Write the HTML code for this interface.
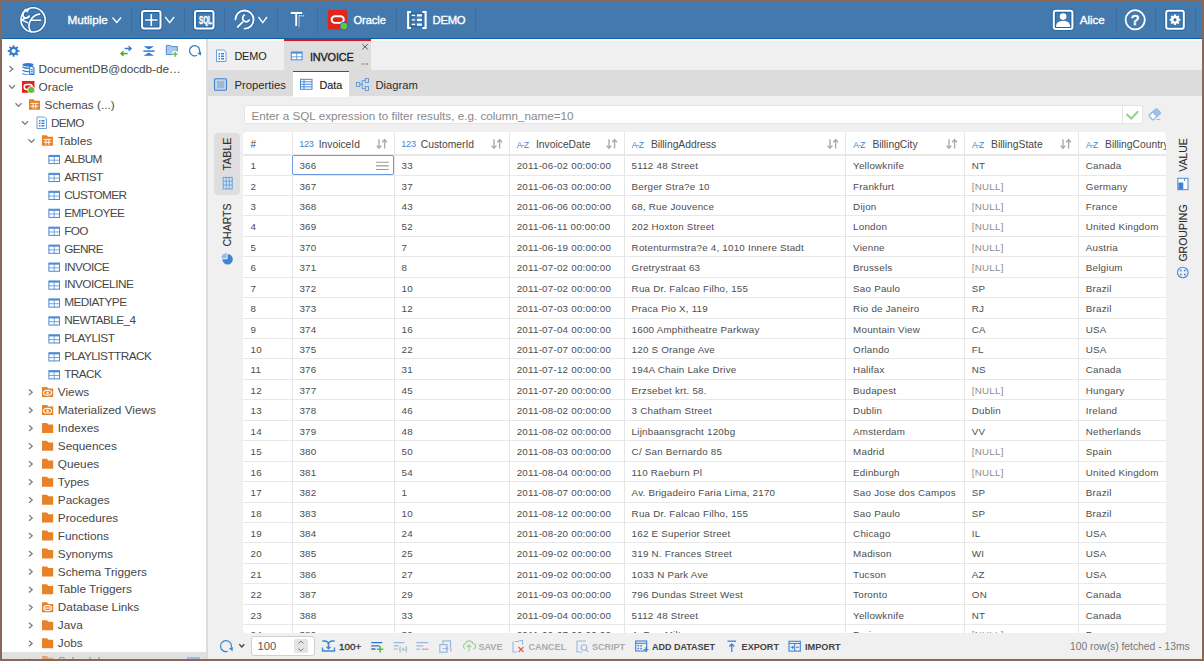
<!DOCTYPE html><html><head><meta charset="utf-8"><style>
*{box-sizing:border-box;margin:0;padding:0}
html,body{width:1204px;height:661px;overflow:hidden;background:#86695a;font-family:"Liberation Sans", sans-serif;}
.abs{position:absolute}
#app{position:absolute;left:2px;top:2px;width:1200px;height:657px;background:#f0f0f0;overflow:hidden}
.t{position:absolute;white-space:nowrap;line-height:1}
svg{position:absolute;overflow:visible}
</style></head><body>
<div id="app"></div>
<div class="abs" style="left:0;top:0;width:1204px;height:661px;overflow:hidden">
<div class="abs" style="left:2px;top:2px;width:1200px;height:36px;background:#4479ae"></div>
<div class="abs" style="left:2px;top:38px;width:1200px;height:1px;background:#0d5fa6"></div>
<div class="abs" style="left:131.4px;top:7px;width:1px;height:25.5px;background:#3d6e9f"></div>
<div class="abs" style="left:184.4px;top:7px;width:1px;height:25.5px;background:#3d6e9f"></div>
<div class="abs" style="left:224.4px;top:7px;width:1px;height:25.5px;background:#3d6e9f"></div>
<div class="abs" style="left:277px;top:7px;width:1px;height:25.5px;background:#3d6e9f"></div>
<div class="abs" style="left:317.4px;top:7px;width:1px;height:25.5px;background:#3d6e9f"></div>
<div class="abs" style="left:396.4px;top:7px;width:1px;height:25.5px;background:#3d6e9f"></div>
<div class="abs" style="left:474.9px;top:7px;width:1px;height:25.5px;background:#3d6e9f"></div>
<div class="abs" style="left:1115.8px;top:7px;width:1px;height:25.5px;background:#3d6e9f"></div>
<div class="abs" style="left:1155.1px;top:7px;width:1px;height:25.5px;background:#3d6e9f"></div>
<div class="abs" style="left:1195px;top:7px;width:1px;height:25.5px;background:#3d6e9f"></div>
<svg style="left:0;top:0" width="1" height="1"><g fill="none" stroke="#1160a8" stroke-width="3.4" stroke-linecap="round" stroke-linejoin="round" opacity="0.45"><circle cx="33.1" cy="19.9" r="12.1"/>
<path d="M22.8 14.6 C23 13 23.6 11.8 24.4 11.2 L25.5 9.4 L27.1 11.6 L28.7 9.4"/>
<path d="M22.8 14.6 C23.2 17 24.5 18.1 26.4 18.1 C27.9 18.1 28.8 17.1 29.2 15.9"/>
<path d="M21.6 19.7 L28.9 16.7 M21.6 19.7 L27.4 22.6"/>
<path d="M39.7 14.1 C35.8 14.2 32.6 16.8 30.6 20.2 C28.6 23.6 28.3 28.2 30.9 31.7"/>
<path d="M31.2 20.3 H40.6"/></g><g fill="none" stroke="#fff" stroke-width="1.6" stroke-linecap="round" stroke-linejoin="round"><circle cx="33.1" cy="19.9" r="12.1"/>
<path d="M22.8 14.6 C23 13 23.6 11.8 24.4 11.2 L25.5 9.4 L27.1 11.6 L28.7 9.4"/>
<path d="M22.8 14.6 C23.2 17 24.5 18.1 26.4 18.1 C27.9 18.1 28.8 17.1 29.2 15.9"/>
<path d="M21.6 19.7 L28.9 16.7 M21.6 19.7 L27.4 22.6"/>
<path d="M39.7 14.1 C35.8 14.2 32.6 16.8 30.6 20.2 C28.6 23.6 28.3 28.2 30.9 31.7"/>
<path d="M31.2 20.3 H40.6"/></g><circle cx="24.6" cy="14.6" r="0.7" fill="#1160a8"/></svg>
<div class="t" style="left:67.5px;top:14.10px;font-size:11.7px;font-weight:normal;color:#fff;letter-spacing:0px;-webkit-text-stroke:0.35px #fff">Mutliple</div>
<svg style="left:0;top:0" width="1" height="1"><path d="M112.5 17.5 L116.75 22.5 L121.0 17.5" fill="none" stroke="#fff" stroke-width="1.3"/></svg>
<svg style="left:0;top:0" width="1" height="1"><rect x="141.79999999999998" y="10.7" width="19.0" height="18.200000000000003" rx="2.5" fill="none" stroke="#0d5fa6" stroke-width="3.6" opacity="0.55"/><rect x="143.7" y="12.6" width="15.2" height="14.400000000000002" fill="none" stroke="#0d5fa6" stroke-width="1" opacity="0.6"/><rect x="142.1" y="11" width="18.4" height="17.6" rx="2" fill="none" stroke="#fff" stroke-width="2"/></svg>
<svg style="left:0;top:0" width="1" height="1"><path d="M151.3 14 V26 M145.2 20 H157.6" stroke="#0d5fa6" stroke-width="3.4" opacity="0.5"/><path d="M151.3 14 V26 M145.2 20 H157.6" stroke="#fff" stroke-width="1.7"/></svg>
<svg style="left:0;top:0" width="1" height="1"><path d="M165.2 17 L169.7 22.6 L174.2 17" fill="none" stroke="#fff" stroke-width="1.3"/></svg>
<svg style="left:0;top:0" width="1" height="1"><rect x="194.7" y="10.7" width="19.1" height="18.200000000000003" rx="2.5" fill="none" stroke="#0d5fa6" stroke-width="3.6" opacity="0.55"/><rect x="196.6" y="12.6" width="15.3" height="14.400000000000002" fill="none" stroke="#0d5fa6" stroke-width="1" opacity="0.6"/><rect x="195" y="11" width="18.5" height="17.6" rx="2" fill="none" stroke="#fff" stroke-width="2"/></svg>
<div class="t" style="left:198.6px;top:14.6px;font-size:9px;font-weight:bold;color:#fff;letter-spacing:-0.2px;transform:scale(0.72,1.22);transform-origin:0 0;-webkit-text-stroke:0.35px #fff">SQL</div>
<svg style="left:0;top:0" width="1" height="1"><g fill="none" stroke="#1160a8" stroke-width="3.4" stroke-linecap="round" opacity="0.45"><path d="M235.4 19.6 A9.1 9.1 0 1 1 244.5 28.7"/><path d="M244.4 15.1 A3.6 3.6 0 1 0 249.3 20.1"/><path d="M242.6 22.2 L237.6 27"/></g><g fill="none" stroke="#fff" stroke-width="1.8" stroke-linecap="round"><path d="M235.4 19.6 A9.1 9.1 0 1 1 244.5 28.7"/><path d="M244.4 15.1 A3.6 3.6 0 1 0 249.3 20.1"/><path d="M242.6 22.2 L237.6 27"/></g></svg>
<svg style="left:0;top:0" width="1" height="1"><path d="M258.5 17 L262.75 22.6 L267.0 17" fill="none" stroke="#fff" stroke-width="1.3"/></svg>
<svg style="left:0;top:0" width="1" height="1"><g fill="none" stroke="#1160a8" opacity="0.5" transform="translate(0.3,0.6)"><path d="M290.8 13 H302.2 M296.2 13 V26" stroke-width="1.9"/><path d="M299.1 15.5 V27.8 M299.1 15.95 H304.2" stroke-width="1.2" stroke-dasharray="1.1 0.9"/></g><g fill="none" stroke="#fff"><path d="M290.8 13 H302.2 M296.2 13 V26" stroke-width="1.9"/><path d="M299.1 15.5 V27.8 M299.1 15.95 H304.2" stroke-width="1.2" stroke-dasharray="1.1 0.9"/></g></svg>
<svg style="left:0;top:0" width="1" height="1">
<rect x="327.8" y="10" width="19.5" height="19.4" rx="1.5" fill="#e1251b"/>
<rect x="331.6" y="16.3" width="12.2" height="6.6" rx="3.3" fill="none" stroke="#fff" stroke-width="1.9"/>
<circle cx="343.9" cy="26.1" r="4.3" fill="#2a68a8"/><circle cx="343.9" cy="26.1" r="3.4" fill="#6cc23a"/></svg>
<div class="t" style="left:353.5px;top:14.89px;font-size:11.0px;font-weight:normal;color:#fff;letter-spacing:0px;-webkit-text-stroke:0.35px #fff">Oracle</div>
<svg style="left:0;top:0" width="1" height="1">
<g fill="none" stroke="#1160a8" stroke-width="1" opacity="0.8"><rect x="411" y="13.3" width="11.8" height="13.5"/></g>
<g fill="none" stroke="#fff" stroke-width="2"><path d="M410.9 12.1 H408.1 V27.9 H410.9"/><path d="M422.4 12.1 H425.6 V27.9 H422.4"/></g>
<g stroke="#fff"><path d="M411.7 15.3 H415.1 M411.7 19.8 H415.1 M411.7 24.4 H415.1" stroke-width="1.2"/><path d="M417 15.45 H421.9 M417 19.85 H421.9 M417 24.55 H421.9" stroke-width="2.3"/></g>
</svg>
<div class="t" style="left:432.5px;top:14.63px;font-size:11.3px;font-weight:normal;color:#fff;letter-spacing:-0.25px;-webkit-text-stroke:0.35px #fff">DEMO</div>
<svg style="left:0;top:0" width="1" height="1"><rect x="1053.5" y="10.5" width="19.200000000000003" height="18.8" rx="2.5" fill="none" stroke="#0d5fa6" stroke-width="3.6" opacity="0.55"/><rect x="1055.3999999999999" y="12.4" width="15.400000000000002" height="15.0" fill="none" stroke="#0d5fa6" stroke-width="1" opacity="0.6"/><rect x="1053.8" y="10.8" width="18.6" height="18.2" rx="2" fill="none" stroke="#fff" stroke-width="2"/></svg>
<svg style="left:0;top:0" width="1" height="1"><circle cx="1063.1" cy="16.6" r="3.3" fill="#fff"/><path d="M1056 27 C1056 22.5 1059 21 1063.1 21 C1067.2 21 1070.2 22.5 1070.2 27 Z" fill="#fff"/></svg>
<div class="t" style="left:1079.7px;top:14.28px;font-size:11.6px;font-weight:normal;color:#fff;letter-spacing:0px;-webkit-text-stroke:0.35px #fff">Alice</div>
<svg style="left:0;top:0" width="1" height="1"><circle cx="1135.2" cy="19.8" r="9.6" fill="none" stroke="#fff" stroke-width="1.8"/></svg>
<div class="t" style="left:1130.9px;top:12.6px;font-size:14.5px;color:#fff;font-weight:normal;-webkit-text-stroke:0.7px #fff">?</div>
<svg style="left:0;top:0" width="1" height="1"><rect x="1165.9" y="10.5" width="18.200000000000003" height="18.6" rx="2.5" fill="none" stroke="#0d5fa6" stroke-width="3.6" opacity="0.55"/><rect x="1167.8" y="12.4" width="14.400000000000002" height="14.8" fill="none" stroke="#0d5fa6" stroke-width="1" opacity="0.6"/><rect x="1166.2" y="10.8" width="17.6" height="18" rx="2" fill="none" stroke="#fff" stroke-width="2"/></svg>
<svg style="left:0;top:0" width="1" height="1"><path d="M1178.79 18.23 L1178.98 18.81 L1180.30 18.75 L1180.30 20.85 L1178.98 20.79 L1178.79 21.37 L1178.51 21.91 L1179.49 22.81 L1178.01 24.29 L1177.11 23.31 L1176.57 23.59 L1175.99 23.78 L1176.05 25.10 L1173.95 25.10 L1174.01 23.78 L1173.43 23.59 L1172.89 23.31 L1171.99 24.29 L1170.51 22.81 L1171.49 21.91 L1171.21 21.37 L1171.02 20.79 L1169.70 20.85 L1169.70 18.75 L1171.02 18.81 L1171.21 18.23 L1171.49 17.69 L1170.51 16.79 L1171.99 15.31 L1172.89 16.29 L1173.43 16.01 L1174.01 15.82 L1173.95 14.50 L1176.05 14.50 L1175.99 15.82 L1176.57 16.01 L1177.11 16.29 L1178.01 15.31 L1179.49 16.79 L1178.51 17.69 Z" fill="#fff"/><circle cx="1175" cy="19.8" r="1.6" fill="#2f6aa6"/></svg>
<div class="abs" style="left:2px;top:39px;width:204px;height:620px;background:#fff"></div>
<div class="abs" style="left:206px;top:39px;width:2px;height:620px;background:#dcdcdc"></div>
<svg style="left:0;top:0" width="1" height="1">
<path d="M17.57 49.35 L17.82 50.16 L19.43 50.08 L19.43 51.92 L17.82 51.84 L17.57 52.65 L17.18 53.39 L18.37 54.47 L17.07 55.77 L15.99 54.58 L15.25 54.97 L14.44 55.22 L14.52 56.83 L12.68 56.83 L12.76 55.22 L11.95 54.97 L11.21 54.58 L10.13 55.77 L8.83 54.47 L10.02 53.39 L9.63 52.65 L9.38 51.84 L7.77 51.92 L7.77 50.08 L9.38 50.16 L9.63 49.35 L10.02 48.61 L8.83 47.53 L10.13 46.23 L11.21 47.42 L11.95 47.03 L12.76 46.78 L12.68 45.17 L14.52 45.17 L14.44 46.78 L15.25 47.03 L15.99 47.42 L17.07 46.23 L18.37 47.53 L17.18 48.61 Z" fill="#2f7bd0"/><circle cx="13.6" cy="51" r="2.1" fill="#fff"/>
<g fill="none" stroke="#4aa531" stroke-width="1.5"><path d="M121.8 53.6 H127.6"/><path d="M123.5 51.3 L121.1 53.6 L123.5 55.9"/></g>
<g fill="none" stroke="#2f7bd0" stroke-width="1.5"><path d="M124.7 48.5 H130.5"/><path d="M128.6 46.2 L131 48.5 L128.6 50.8"/></g>
<path d="M143.5 46.2 H154.1 L148.8 49.6 Z" fill="#2f7bd0"/><path d="M143.4 51.1 H154.6" stroke="#2f7bd0" stroke-width="1.5"/><path d="M143.5 55.8 H154.1 L148.8 52.5 Z" fill="#2f7bd0"/>
<path d="M166.3 45.4 H170.5 L171.8 46.6 H177.4 V54.6 H166.3 Z" fill="#a9c8ec" stroke="#3d84d2" stroke-width="0.9"/>
<rect x="172.5" y="51.3" width="6" height="6" fill="#fff"/>
<path d="M172.8 54.3 H177.6 M175.2 51.9 V56.7" stroke="#6cc24a" stroke-width="1.5"/>
<path d="M197.15 55.2 A5.1 5.1 0 1 1 199.4 52.5" fill="none" stroke="#2f7bd0" stroke-width="1.25"/>
<path d="M197.4 53.6 L201.2 51.4 L200.9 55.6 Z" fill="#2f7bd0"/>
</svg>
<svg style="left:0;top:0" width="1" height="1"><path d="M9.5 66.2 L12.7 69 L9.5 71.8" fill="none" stroke="#7a7a7a" stroke-width="1.25"/></svg>
<svg style="left:0;top:0" width="1" height="1"><g fill="#2f7bd0">
<ellipse cx="28.0" cy="64.7" rx="5.6" ry="1.7"/>
<path d="M22.4 66.3 Q25.4 67.7 28.9 67.6 V68.9 Q25.4 69.0 22.4 67.7 Z"/>
<path d="M22.4 69.7 Q25.4 71.1 28.9 71.0 V72.3 Q25.4 72.4 22.4 71.1 Z"/>
<path d="M22.4 73.1 Q25.4 74.5 28.9 74.4 V74.9 Q25.4 75.0 22.4 74.3 Z"/>
</g>
<path d="M29.7 66.3 H32.2 L33.9 68.0 V74.5 H29.7 Z" fill="#fff" stroke="#2f7bd0" stroke-width="1.2"/>
<path d="M31.0 69.6 H32.8 M31.0 71.4 H32.8 M31.0 73.2 H32.8" stroke="#2f7bd0" stroke-width="1"/>
</svg>
<div class="t" style="left:38.6px;top:63.71px;font-size:11.8px;font-weight:normal;color:#474747;letter-spacing:-0.05px">DocumentDB@docdb-de…</div>
<svg style="left:0;top:0" width="1" height="1"><path d="M9 85.2 L12 88.4 L15 85.2" fill="none" stroke="#7a7a7a" stroke-width="1.25"/></svg>
<svg style="left:0;top:0" width="1" height="1">
<rect x="22" y="81" width="12.5" height="11.8" fill="#e1251b"/>
<rect x="24.2" y="84.5" width="8" height="5" rx="2.5" fill="none" stroke="#fff" stroke-width="1.5"/>
<circle cx="31.2" cy="90" r="3.7" fill="#fff"/><circle cx="31.2" cy="90" r="3" fill="#5fbf3a"/></svg>
<div class="t" style="left:38.6px;top:82.15px;font-size:11.8px;font-weight:normal;color:#474747;letter-spacing:0px">Oracle</div>
<svg style="left:0;top:0" width="1" height="1"><path d="M15.5 103.2 L18.5 106.4 L21.5 103.2" fill="none" stroke="#7a7a7a" stroke-width="1.25"/></svg>
<svg style="left:0;top:0" width="1" height="1">
<path d="M29 99.2 H33.5 L35 100.7 H40 V109.7 H29 Z" fill="#e8822a"/>
<g stroke="#fff" stroke-width="0.9" fill="none"><path d="M30.5 103.4 H38.5 M30.5 106.2 H38.5 M33 103.4 V108.7 M35.8 103.4 V108.7"/></g></svg>
<div class="t" style="left:44.6px;top:100.09px;font-size:11.8px;font-weight:normal;color:#474747;letter-spacing:0px">Schemas (...)</div>
<svg style="left:0;top:0" width="1" height="1"><path d="M22 121.2 L25 124.4 L28 121.2" fill="none" stroke="#7a7a7a" stroke-width="1.25"/></svg>
<svg style="left:0;top:0" width="1" height="1"><path d="M37 117 H44.5 L46.5 119 V128.5 H37 Z" fill="#fff" stroke="#6b9fe0" stroke-width="1"/>
<g fill="#3d84d2"><rect x="39" y="120" width="1.5" height="1.5"/><rect x="41.5" y="120" width="3" height="1.5"/><rect x="39" y="122.5" width="1.5" height="1.5"/><rect x="41.5" y="122.5" width="3" height="1.5"/><rect x="39" y="125" width="1.5" height="1.5"/><rect x="41.5" y="125" width="3" height="1.5"/></g></svg>
<div class="t" style="left:51px;top:118.03px;font-size:11.8px;font-weight:normal;color:#474747;letter-spacing:-0.664px">DEMO</div>
<svg style="left:0;top:0" width="1" height="1"><path d="M28.5 139.2 L31.5 142.4 L34.5 139.2" fill="none" stroke="#7a7a7a" stroke-width="1.25"/></svg>
<svg style="left:0;top:0" width="1" height="1">
<path d="M42 135.2 H46.5 L48 136.7 H53 V145.7 H42 Z" fill="#e8822a"/>
<g stroke="#fff" stroke-width="0.9" fill="none"><path d="M43.5 139.39999999999998 H51.5 M43.5 142.2 H51.5 M46 139.39999999999998 V144.7 M48.8 139.39999999999998 V144.7"/></g></svg>
<div class="t" style="left:58px;top:135.97px;font-size:11.8px;font-weight:normal;color:#474747;letter-spacing:0px">Tables</div>
<svg style="left:0;top:0" width="1" height="1"><rect x="48.9" y="155.40000000000003" width="10.6" height="8.2" fill="#fff" stroke="#4a8ad6" stroke-width="1"/>
<rect x="48.9" y="155.40000000000003" width="10.6" height="1.6" fill="#4a8ad6"/>
<path d="M48.9 160.20000000000005 H59.5 M54.199999999999996 156.40000000000003 V163.60000000000002" stroke="#4a8ad6" stroke-width="0.9" opacity="0.85"/></svg>
<div class="t" style="left:64.2px;top:153.91px;font-size:11.8px;font-weight:normal;color:#474747;letter-spacing:-0.61px">ALBUM</div>
<svg style="left:0;top:0" width="1" height="1"><rect x="48.9" y="173.34000000000003" width="10.6" height="8.2" fill="#fff" stroke="#4a8ad6" stroke-width="1"/>
<rect x="48.9" y="173.34000000000003" width="10.6" height="1.6" fill="#4a8ad6"/>
<path d="M48.9 178.14000000000004 H59.5 M54.199999999999996 174.34000000000003 V181.54000000000002" stroke="#4a8ad6" stroke-width="0.9" opacity="0.85"/></svg>
<div class="t" style="left:64.2px;top:171.85px;font-size:11.8px;font-weight:normal;color:#474747;letter-spacing:-0.522px">ARTIST</div>
<svg style="left:0;top:0" width="1" height="1"><rect x="48.9" y="191.28000000000003" width="10.6" height="8.2" fill="#fff" stroke="#4a8ad6" stroke-width="1"/>
<rect x="48.9" y="191.28000000000003" width="10.6" height="1.6" fill="#4a8ad6"/>
<path d="M48.9 196.08000000000004 H59.5 M54.199999999999996 192.28000000000003 V199.48000000000002" stroke="#4a8ad6" stroke-width="0.9" opacity="0.85"/></svg>
<div class="t" style="left:64.2px;top:189.79px;font-size:11.8px;font-weight:normal;color:#474747;letter-spacing:-0.631px">CUSTOMER</div>
<svg style="left:0;top:0" width="1" height="1"><rect x="48.9" y="209.22000000000003" width="10.6" height="8.2" fill="#fff" stroke="#4a8ad6" stroke-width="1"/>
<rect x="48.9" y="209.22000000000003" width="10.6" height="1.6" fill="#4a8ad6"/>
<path d="M48.9 214.02000000000004 H59.5 M54.199999999999996 210.22000000000003 V217.42000000000002" stroke="#4a8ad6" stroke-width="0.9" opacity="0.85"/></svg>
<div class="t" style="left:64.2px;top:207.73px;font-size:11.8px;font-weight:normal;color:#474747;letter-spacing:-0.609px">EMPLOYEE</div>
<svg style="left:0;top:0" width="1" height="1"><rect x="48.9" y="227.16000000000003" width="10.6" height="8.2" fill="#fff" stroke="#4a8ad6" stroke-width="1"/>
<rect x="48.9" y="227.16000000000003" width="10.6" height="1.6" fill="#4a8ad6"/>
<path d="M48.9 231.96000000000004 H59.5 M54.199999999999996 228.16000000000003 V235.36" stroke="#4a8ad6" stroke-width="0.9" opacity="0.85"/></svg>
<div class="t" style="left:64.2px;top:225.67px;font-size:11.8px;font-weight:normal;color:#474747;letter-spacing:-0.639px">FOO</div>
<svg style="left:0;top:0" width="1" height="1"><rect x="48.9" y="245.10000000000002" width="10.6" height="8.2" fill="#fff" stroke="#4a8ad6" stroke-width="1"/>
<rect x="48.9" y="245.10000000000002" width="10.6" height="1.6" fill="#4a8ad6"/>
<path d="M48.9 249.90000000000003 H59.5 M54.199999999999996 246.10000000000002 V253.3" stroke="#4a8ad6" stroke-width="0.9" opacity="0.85"/></svg>
<div class="t" style="left:64.2px;top:243.61px;font-size:11.8px;font-weight:normal;color:#474747;letter-spacing:-0.629px">GENRE</div>
<svg style="left:0;top:0" width="1" height="1"><rect x="48.9" y="263.04" width="10.6" height="8.2" fill="#fff" stroke="#4a8ad6" stroke-width="1"/>
<rect x="48.9" y="263.04" width="10.6" height="1.6" fill="#4a8ad6"/>
<path d="M48.9 267.84000000000003 H59.5 M54.199999999999996 264.04 V271.24" stroke="#4a8ad6" stroke-width="0.9" opacity="0.85"/></svg>
<div class="t" style="left:64.2px;top:261.55px;font-size:11.8px;font-weight:normal;color:#474747;letter-spacing:-0.52px">INVOICE</div>
<svg style="left:0;top:0" width="1" height="1"><rect x="48.9" y="280.9800000000001" width="10.6" height="8.2" fill="#fff" stroke="#4a8ad6" stroke-width="1"/>
<rect x="48.9" y="280.9800000000001" width="10.6" height="1.6" fill="#4a8ad6"/>
<path d="M48.9 285.7800000000001 H59.5 M54.199999999999996 281.9800000000001 V289.18000000000006" stroke="#4a8ad6" stroke-width="0.9" opacity="0.85"/></svg>
<div class="t" style="left:64.2px;top:279.49px;font-size:11.8px;font-weight:normal;color:#474747;letter-spacing:-0.51px">INVOICELINE</div>
<svg style="left:0;top:0" width="1" height="1"><rect x="48.9" y="298.92" width="10.6" height="8.2" fill="#fff" stroke="#4a8ad6" stroke-width="1"/>
<rect x="48.9" y="298.92" width="10.6" height="1.6" fill="#4a8ad6"/>
<path d="M48.9 303.72 H59.5 M54.199999999999996 299.92 V307.12" stroke="#4a8ad6" stroke-width="0.9" opacity="0.85"/></svg>
<div class="t" style="left:64.2px;top:297.43px;font-size:11.8px;font-weight:normal;color:#474747;letter-spacing:-0.561px">MEDIATYPE</div>
<svg style="left:0;top:0" width="1" height="1"><rect x="48.9" y="316.86000000000007" width="10.6" height="8.2" fill="#fff" stroke="#4a8ad6" stroke-width="1"/>
<rect x="48.9" y="316.86000000000007" width="10.6" height="1.6" fill="#4a8ad6"/>
<path d="M48.9 321.6600000000001 H59.5 M54.199999999999996 317.86000000000007 V325.06000000000006" stroke="#4a8ad6" stroke-width="0.9" opacity="0.85"/></svg>
<div class="t" style="left:64.2px;top:315.37px;font-size:11.8px;font-weight:normal;color:#474747;letter-spacing:-0.579px">NEWTABLE_4</div>
<svg style="left:0;top:0" width="1" height="1"><rect x="48.9" y="334.8" width="10.6" height="8.2" fill="#fff" stroke="#4a8ad6" stroke-width="1"/>
<rect x="48.9" y="334.8" width="10.6" height="1.6" fill="#4a8ad6"/>
<path d="M48.9 339.6 H59.5 M54.199999999999996 335.8 V343.0" stroke="#4a8ad6" stroke-width="0.9" opacity="0.85"/></svg>
<div class="t" style="left:64.2px;top:333.31px;font-size:11.8px;font-weight:normal;color:#474747;letter-spacing:-0.508px">PLAYLIST</div>
<svg style="left:0;top:0" width="1" height="1"><rect x="48.9" y="352.74000000000007" width="10.6" height="8.2" fill="#fff" stroke="#4a8ad6" stroke-width="1"/>
<rect x="48.9" y="352.74000000000007" width="10.6" height="1.6" fill="#4a8ad6"/>
<path d="M48.9 357.5400000000001 H59.5 M54.199999999999996 353.74000000000007 V360.94000000000005" stroke="#4a8ad6" stroke-width="0.9" opacity="0.85"/></svg>
<div class="t" style="left:64.2px;top:351.25px;font-size:11.8px;font-weight:normal;color:#474747;letter-spacing:-0.544px">PLAYLISTTRACK</div>
<svg style="left:0;top:0" width="1" height="1"><rect x="48.9" y="370.68" width="10.6" height="8.2" fill="#fff" stroke="#4a8ad6" stroke-width="1"/>
<rect x="48.9" y="370.68" width="10.6" height="1.6" fill="#4a8ad6"/>
<path d="M48.9 375.48 H59.5 M54.199999999999996 371.68 V378.88" stroke="#4a8ad6" stroke-width="0.9" opacity="0.85"/></svg>
<div class="t" style="left:64.2px;top:369.19px;font-size:11.8px;font-weight:normal;color:#474747;letter-spacing:-0.6px">TRACK</div>
<svg style="left:0;top:0" width="1" height="1"><path d="M29 389.52000000000004 L32.2 392.32000000000005 L29 395.12000000000006" fill="none" stroke="#7a7a7a" stroke-width="1.25"/></svg>
<svg style="left:0;top:0" width="1" height="1"><path d="M42 387.02000000000004 H47 L48.3 388.62000000000006 H53.2 V397.02000000000004 H42 Z" fill="#e8822a"/><ellipse cx="47.6" cy="392.72" rx="4" ry="2.4" fill="none" stroke="#fff" stroke-width="1.1"/><circle cx="47.6" cy="392.72" r="1.2" fill="#fff"/></svg>
<div class="t" style="left:57.8px;top:387.13px;font-size:11.8px;font-weight:normal;color:#474747;letter-spacing:0px">Views</div>
<svg style="left:0;top:0" width="1" height="1"><path d="M29 407.46 L32.2 410.26 L29 413.06" fill="none" stroke="#7a7a7a" stroke-width="1.25"/></svg>
<svg style="left:0;top:0" width="1" height="1"><path d="M42 404.96 H47 L48.3 406.56 H53.2 V414.96 H42 Z" fill="#e8822a"/><ellipse cx="47.6" cy="410.65999999999997" rx="4" ry="2.4" fill="none" stroke="#fff" stroke-width="1.1"/><circle cx="47.6" cy="410.65999999999997" r="1.2" fill="#fff"/></svg>
<div class="t" style="left:57.8px;top:405.07px;font-size:11.8px;font-weight:normal;color:#474747;letter-spacing:0px">Materialized Views</div>
<svg style="left:0;top:0" width="1" height="1"><path d="M29 425.40000000000003 L32.2 428.20000000000005 L29 431.00000000000006" fill="none" stroke="#7a7a7a" stroke-width="1.25"/></svg>
<svg style="left:0;top:0" width="1" height="1"><path d="M42 422.90000000000003 H47 L48.3 424.50000000000006 H53.2 V432.90000000000003 H42 Z" fill="#e8822a"/></svg>
<div class="t" style="left:57.8px;top:423.01px;font-size:11.8px;font-weight:normal;color:#474747;letter-spacing:0px">Indexes</div>
<svg style="left:0;top:0" width="1" height="1"><path d="M29 443.34 L32.2 446.14 L29 448.94" fill="none" stroke="#7a7a7a" stroke-width="1.25"/></svg>
<svg style="left:0;top:0" width="1" height="1"><path d="M42 440.84 H47 L48.3 442.44 H53.2 V450.84 H42 Z" fill="#e8822a"/></svg>
<div class="t" style="left:57.8px;top:440.95px;font-size:11.8px;font-weight:normal;color:#474747;letter-spacing:0px">Sequences</div>
<svg style="left:0;top:0" width="1" height="1"><path d="M29 461.28000000000003 L32.2 464.08000000000004 L29 466.88000000000005" fill="none" stroke="#7a7a7a" stroke-width="1.25"/></svg>
<svg style="left:0;top:0" width="1" height="1"><path d="M42 458.78000000000003 H47 L48.3 460.38000000000005 H53.2 V468.78000000000003 H42 Z" fill="#e8822a"/></svg>
<div class="t" style="left:57.8px;top:458.89px;font-size:11.8px;font-weight:normal;color:#474747;letter-spacing:0px">Queues</div>
<svg style="left:0;top:0" width="1" height="1"><path d="M29 479.21999999999997 L32.2 482.02 L29 484.82" fill="none" stroke="#7a7a7a" stroke-width="1.25"/></svg>
<svg style="left:0;top:0" width="1" height="1"><path d="M42 476.71999999999997 H47 L48.3 478.32 H53.2 V486.71999999999997 H42 Z" fill="#e8822a"/></svg>
<div class="t" style="left:57.8px;top:476.83px;font-size:11.8px;font-weight:normal;color:#474747;letter-spacing:0px">Types</div>
<svg style="left:0;top:0" width="1" height="1"><path d="M29 497.16 L32.2 499.96000000000004 L29 502.76000000000005" fill="none" stroke="#7a7a7a" stroke-width="1.25"/></svg>
<svg style="left:0;top:0" width="1" height="1"><path d="M42 494.66 H47 L48.3 496.26000000000005 H53.2 V504.66 H42 Z" fill="#e8822a"/></svg>
<div class="t" style="left:57.8px;top:494.77px;font-size:11.8px;font-weight:normal;color:#474747;letter-spacing:0px">Packages</div>
<svg style="left:0;top:0" width="1" height="1"><path d="M29 515.1000000000001 L32.2 517.9000000000001 L29 520.7" fill="none" stroke="#7a7a7a" stroke-width="1.25"/></svg>
<svg style="left:0;top:0" width="1" height="1"><path d="M42 512.6000000000001 H47 L48.3 514.2000000000002 H53.2 V522.6000000000001 H42 Z" fill="#e8822a"/></svg>
<div class="t" style="left:57.8px;top:512.71px;font-size:11.8px;font-weight:normal;color:#474747;letter-spacing:0px">Procedures</div>
<svg style="left:0;top:0" width="1" height="1"><path d="M29 533.0400000000001 L32.2 535.84 L29 538.64" fill="none" stroke="#7a7a7a" stroke-width="1.25"/></svg>
<svg style="left:0;top:0" width="1" height="1"><path d="M42 530.5400000000001 H47 L48.3 532.1400000000001 H53.2 V540.5400000000001 H42 Z" fill="#e8822a"/></svg>
<div class="t" style="left:57.8px;top:530.65px;font-size:11.8px;font-weight:normal;color:#474747;letter-spacing:0px">Functions</div>
<svg style="left:0;top:0" width="1" height="1"><path d="M29 550.9800000000001 L32.2 553.7800000000001 L29 556.58" fill="none" stroke="#7a7a7a" stroke-width="1.25"/></svg>
<svg style="left:0;top:0" width="1" height="1"><path d="M42 548.4800000000001 H47 L48.3 550.0800000000002 H53.2 V558.4800000000001 H42 Z" fill="#e8822a"/></svg>
<div class="t" style="left:57.8px;top:548.59px;font-size:11.8px;font-weight:normal;color:#474747;letter-spacing:0px">Synonyms</div>
<svg style="left:0;top:0" width="1" height="1"><path d="M29 568.9200000000001 L32.2 571.72 L29 574.52" fill="none" stroke="#7a7a7a" stroke-width="1.25"/></svg>
<svg style="left:0;top:0" width="1" height="1"><path d="M42 566.4200000000001 H47 L48.3 568.0200000000001 H53.2 V576.4200000000001 H42 Z" fill="#e8822a"/></svg>
<div class="t" style="left:57.8px;top:566.53px;font-size:11.8px;font-weight:normal;color:#474747;letter-spacing:0px">Schema Triggers</div>
<svg style="left:0;top:0" width="1" height="1"><path d="M29 586.86 L32.2 589.66 L29 592.4599999999999" fill="none" stroke="#7a7a7a" stroke-width="1.25"/></svg>
<svg style="left:0;top:0" width="1" height="1"><path d="M42 584.36 H47 L48.3 585.96 H53.2 V594.36 H42 Z" fill="#e8822a"/></svg>
<div class="t" style="left:57.8px;top:584.47px;font-size:11.8px;font-weight:normal;color:#474747;letter-spacing:0px">Table Triggers</div>
<svg style="left:0;top:0" width="1" height="1"><path d="M29 604.8000000000001 L32.2 607.6 L29 610.4" fill="none" stroke="#7a7a7a" stroke-width="1.25"/></svg>
<svg style="left:0;top:0" width="1" height="1"><path d="M42 602.3000000000001 H47 L48.3 603.9000000000001 H53.2 V612.3000000000001 H42 Z" fill="#e8822a"/><ellipse cx="47.6" cy="608.1" rx="3.8" ry="2.6" fill="none" stroke="#fff" stroke-width="1.2"/><path d="M45 608.1 H50.2" stroke="#fff" stroke-width="1.1"/></svg>
<div class="t" style="left:57.8px;top:602.41px;font-size:11.8px;font-weight:normal;color:#474747;letter-spacing:0px">Database Links</div>
<svg style="left:0;top:0" width="1" height="1"><path d="M29 622.74 L32.2 625.54 L29 628.3399999999999" fill="none" stroke="#7a7a7a" stroke-width="1.25"/></svg>
<svg style="left:0;top:0" width="1" height="1"><path d="M42 620.24 H47 L48.3 621.84 H53.2 V630.24 H42 Z" fill="#e8822a"/></svg>
<div class="t" style="left:57.8px;top:620.35px;font-size:11.8px;font-weight:normal;color:#474747;letter-spacing:0px">Java</div>
<svg style="left:0;top:0" width="1" height="1"><path d="M29 640.6800000000001 L32.2 643.48 L29 646.28" fill="none" stroke="#7a7a7a" stroke-width="1.25"/></svg>
<svg style="left:0;top:0" width="1" height="1"><path d="M42 638.1800000000001 H47 L48.3 639.7800000000001 H53.2 V648.1800000000001 H42 Z" fill="#e8822a"/></svg>
<div class="t" style="left:57.8px;top:638.29px;font-size:11.8px;font-weight:normal;color:#474747;letter-spacing:0px">Jobs</div>
<svg style="left:0;top:0" width="1" height="1"><path d="M29 658.6200000000001 L32.2 661.4200000000001 L29 664.22" fill="none" stroke="#7a7a7a" stroke-width="1.25"/></svg>
<svg style="left:0;top:0" width="1" height="1"><path d="M42 656.1200000000001 H47 L48.3 657.7200000000001 H53.2 V666.1200000000001 H42 Z" fill="#e8822a"/></svg>
<div class="t" style="left:57.8px;top:656.23px;font-size:11.8px;font-weight:normal;color:#474747;letter-spacing:0px">Scheduler</div>
<div class="abs" style="left:2px;top:652px;width:204px;height:7px;background:rgba(200,200,200,0.55)"></div>
<div class="abs" style="left:186.5px;top:657px;width:13px;height:2px;background:#9fbde3"></div>
<div class="abs" style="left:208px;top:39px;width:994px;height:620px;background:#f0f0f0"></div>
<div class="abs" style="left:208px;top:39px;width:76px;height:31px;background:#efefef"></div>
<div class="abs" style="left:208px;top:39px;width:994px;height:2px;background:#f8f8f8"></div>
<div class="abs" style="left:284px;top:39px;width:87px;height:31px;background:#dedede"></div>
<div class="abs" style="left:284px;top:39px;width:87px;height:1.8px;background:#e0141e"></div>
<svg style="left:0;top:0" width="1" height="1"><path d="M216.5 50 H224.0 L226.0 52 V61.5 H216.5 Z" fill="#fff" stroke="#6b9fe0" stroke-width="1"/>
<g fill="#3d84d2"><rect x="218.5" y="53" width="1.5" height="1.5"/><rect x="221.0" y="53" width="3" height="1.5"/><rect x="218.5" y="55.5" width="1.5" height="1.5"/><rect x="221.0" y="55.5" width="3" height="1.5"/><rect x="218.5" y="58" width="1.5" height="1.5"/><rect x="221.0" y="58" width="3" height="1.5"/></g></svg>
<div class="t" style="left:234.4px;top:51.47px;font-size:10.9px;font-weight:normal;color:#222;letter-spacing:-0.15px">DEMO</div>
<svg style="left:0;top:0" width="1" height="1"><rect x="291.3" y="52.0" width="10.8" height="7.800000000000001" fill="#fff" stroke="#4a8ad6" stroke-width="1"/>
<rect x="291.3" y="52.0" width="10.8" height="1.6" fill="#4a8ad6"/>
<path d="M291.3 56.8 H302.1 M296.7 53.0 V59.8" stroke="#4a8ad6" stroke-width="0.9" opacity="0.85"/></svg>
<div class="t" style="left:309.9px;top:51.67px;font-size:10.9px;font-weight:normal;color:#1a1a1a;letter-spacing:-0.15px;-webkit-text-stroke:0.3px #1a1a1a">INVOICE</div>
<svg style="left:0;top:0" width="1" height="1"><path d="M362.4 44.2 L367.8 49.4 M367.8 44.2 L362.4 49.4" stroke="#555" stroke-width="1"/><g fill="#666"><circle cx="362.3" cy="64" r="0.7"/><circle cx="364.8" cy="64" r="0.7"/><circle cx="367.3" cy="64" r="0.7"/></g></svg>
<div class="abs" style="left:208px;top:70.4px;width:994px;height:26.1px;background:#dcdcdc"></div>
<div class="abs" style="left:293px;top:70.6px;width:56.3px;height:26px;background:#fff"></div>
<div class="abs" style="left:293px;top:70.6px;width:56.3px;height:1.4px;background:#e0141e"></div>
<svg style="left:0;top:0" width="1" height="1"><rect x="214.5" y="78.8" width="12" height="11.5" rx="1" fill="#c5d4e8" stroke="#3d84d2" stroke-width="1.1"/><rect x="217" y="81" width="7.2" height="7.2" fill="#9fb6d4"/></svg>
<div class="t" style="left:234.4px;top:79.63px;font-size:11.3px;font-weight:normal;color:#2a2a2a;letter-spacing:0px">Properties</div>
<svg style="left:0;top:0" width="1" height="1"><g fill="none" stroke="#4a8ad6" stroke-width="1"><rect x="300.5" y="79.3" width="11.5" height="10"/><path d="M300.5 81.8 H312 M300.5 84.3 H312 M300.5 86.8 H312 M304 79.3 V89.3"/></g></svg>
<div class="t" style="left:319.5px;top:80.06px;font-size:10.8px;font-weight:normal;color:#1a1a1a;letter-spacing:0px;-webkit-text-stroke:0.15px #1a1a1a">Data</div>
<svg style="left:0;top:0" width="1" height="1"><g fill="none" stroke="#5b95d8" stroke-width="0.9"><rect x="356.4" y="82.4" width="3.4" height="4"/><rect x="365.3" y="78.5" width="3.2" height="4"/><rect x="365.3" y="86.5" width="3.2" height="4"/><path d="M359.8 84.4 H362.2 M362.2 80.5 V88.5 M362.2 80.5 H365.3 M362.2 88.5 H365.3"/></g></svg>
<div class="t" style="left:375.5px;top:79.72px;font-size:11.2px;font-weight:normal;color:#2a2a2a;letter-spacing:0px">Diagram</div>
<div class="abs" style="left:208px;top:97px;width:994px;height:562px;background:#f0f0f0"></div>
<div class="abs" style="left:243.6px;top:105.3px;width:899.3px;height:18.9px;background:#fff;border:1px solid #e4e4e4;border-radius:2px"></div>
<div class="abs" style="left:1122px;top:105.3px;width:1px;height:18.9px;background:#e4e4e4"></div>
<div class="t" style="left:251.5px;top:109.60px;font-size:11.7px;font-weight:normal;color:#8a8a8a;letter-spacing:0px">Enter a SQL expression to filter results, e.g. column_name=10</div>
<svg style="left:0;top:0" width="1" height="1"><path d="M1126.5 114 L1131.3 118.5 L1138.3 111.1" fill="none" stroke="#95cf8e" stroke-width="2.1"/>
<g transform="translate(1154.7,114.3) rotate(-42)"><rect x="-5.3" y="-3.1" width="10.6" height="6.2" rx="0.8" fill="#fff" stroke="#7eaee2" stroke-width="1.1"/><rect x="-0.6" y="-3.1" width="5.9" height="6.2" rx="0.6" fill="#9dc0e6"/></g><path d="M1156.3 119.5 H1160.2" stroke="#8db6e4" stroke-width="0.9"/></svg>
<div class="abs" style="left:214px;top:132.7px;width:25.8px;height:62px;background:#dedede;border-radius:4px"></div>
<div class="t" style="left:227.2px;top:154.2px;font-size:10.6px;color:#2e2e2e;letter-spacing:0px;-webkit-text-stroke:0.12px #2e2e2e;transform:translate(-50%,-50%) rotate(-90deg);">TABLE</div>
<svg style="left:0;top:0" width="1" height="1"><rect x="223.2" y="177.4" width="9" height="11.6" fill="#d3e2f4" stroke="#6a9fdc" stroke-width="1"/><g stroke="#6a9fdc" stroke-width="0.9"><path d="M223.2 181.2 H232.2 M223.2 185 H232.2 M226.2 177.4 V189 M229.2 177.4 V189"/></g></svg>
<div class="t" style="left:227.2px;top:225.4px;font-size:10.5px;color:#2e2e2e;letter-spacing:0px;-webkit-text-stroke:0.12px #2e2e2e;transform:translate(-50%,-50%) rotate(-90deg);">CHARTS</div>
<svg style="left:0;top:0" width="1" height="1"><path d="M227.6 259.2 V254 A5.2 5.2 0 1 1 222.4 259.2 Z" fill="#3d84d2"/><path d="M226.6 258.2 V253 A5.2 5.2 0 0 0 221.4 258.2 Z" fill="#8dbbea"/></svg>
<div class="t" style="left:1182.8px;top:155px;font-size:10.5px;color:#2e2e2e;letter-spacing:0px;-webkit-text-stroke:0.12px #2e2e2e;transform:translate(-50%,-50%) rotate(-90deg);">VALUE</div>
<svg style="left:0;top:0" width="1" height="1"><rect x="1177.8" y="178.3" width="10.2" height="11.4" fill="#fff" stroke="#4a8ad6" stroke-width="1"/><rect x="1178.3" y="182.5" width="5" height="7" fill="#3d84d2"/><path d="M1184.5 179 V181" stroke="#4a8ad6" stroke-width="1"/></svg>
<div class="t" style="left:1182.8px;top:233px;font-size:10.5px;color:#2e2e2e;letter-spacing:0px;-webkit-text-stroke:0.12px #2e2e2e;transform:translate(-50%,-50%) rotate(-90deg);">GROUPING</div>
<svg style="left:0;top:0" width="1" height="1"><circle cx="1182.8" cy="272.5" r="5.3" fill="none" stroke="#4a8ad6" stroke-width="1.1"/><g fill="#4a8ad6"><circle cx="1180.8" cy="270.5" r="0.9"/><circle cx="1184.8" cy="270.5" r="0.9"/><circle cx="1180.8" cy="274.5" r="0.9"/><circle cx="1184.8" cy="274.5" r="0.9"/></g></svg>
<div class="abs" style="left:243.3px;top:132.4px;width:922.7px;height:500.20000000000005px;background:#fff;border-radius:4px;overflow:hidden">
<div class="abs" style="left:0;top:21.70px;width:922.7px;height:1.6px;background:#e8e8e8"></div>
<div class="abs" style="left:0;top:42.23px;width:922.7px;height:1px;background:#e8e8e8"></div>
<div class="abs" style="left:0;top:62.66px;width:922.7px;height:1px;background:#e8e8e8"></div>
<div class="abs" style="left:0;top:83.09px;width:922.7px;height:1px;background:#e8e8e8"></div>
<div class="abs" style="left:0;top:103.52px;width:922.7px;height:1px;background:#e8e8e8"></div>
<div class="abs" style="left:0;top:123.95px;width:922.7px;height:1px;background:#e8e8e8"></div>
<div class="abs" style="left:0;top:144.38px;width:922.7px;height:1px;background:#e8e8e8"></div>
<div class="abs" style="left:0;top:164.81px;width:922.7px;height:1px;background:#e8e8e8"></div>
<div class="abs" style="left:0;top:185.24px;width:922.7px;height:1px;background:#e8e8e8"></div>
<div class="abs" style="left:0;top:205.67px;width:922.7px;height:1px;background:#e8e8e8"></div>
<div class="abs" style="left:0;top:226.10px;width:922.7px;height:1px;background:#e8e8e8"></div>
<div class="abs" style="left:0;top:246.53px;width:922.7px;height:1px;background:#e8e8e8"></div>
<div class="abs" style="left:0;top:266.96px;width:922.7px;height:1px;background:#e8e8e8"></div>
<div class="abs" style="left:0;top:287.39px;width:922.7px;height:1px;background:#e8e8e8"></div>
<div class="abs" style="left:0;top:307.82px;width:922.7px;height:1px;background:#e8e8e8"></div>
<div class="abs" style="left:0;top:328.25px;width:922.7px;height:1px;background:#e8e8e8"></div>
<div class="abs" style="left:0;top:348.68px;width:922.7px;height:1px;background:#e8e8e8"></div>
<div class="abs" style="left:0;top:369.11px;width:922.7px;height:1px;background:#e8e8e8"></div>
<div class="abs" style="left:0;top:389.54px;width:922.7px;height:1px;background:#e8e8e8"></div>
<div class="abs" style="left:0;top:409.97px;width:922.7px;height:1px;background:#e8e8e8"></div>
<div class="abs" style="left:0;top:430.40px;width:922.7px;height:1px;background:#e8e8e8"></div>
<div class="abs" style="left:0;top:450.83px;width:922.7px;height:1px;background:#e8e8e8"></div>
<div class="abs" style="left:0;top:471.26px;width:922.7px;height:1px;background:#e8e8e8"></div>
<div class="abs" style="left:0;top:491.69px;width:922.7px;height:1px;background:#e8e8e8"></div>
<div class="abs" style="left:0;top:512.12px;width:922.7px;height:1px;background:#e8e8e8"></div>
<div class="abs" style="left:48.70px;top:0;width:1px;height:500.20000000000005px;background:#e6e6e6"></div>
<div class="abs" style="left:150.70px;top:0;width:1px;height:500.20000000000005px;background:#e6e6e6"></div>
<div class="abs" style="left:265.70px;top:0;width:1px;height:500.20000000000005px;background:#e6e6e6"></div>
<div class="abs" style="left:380.70px;top:0;width:1px;height:500.20000000000005px;background:#e6e6e6"></div>
<div class="abs" style="left:601.70px;top:0;width:1px;height:500.20000000000005px;background:#e6e6e6"></div>
<div class="abs" style="left:720.70px;top:0;width:1px;height:500.20000000000005px;background:#e6e6e6"></div>
<div class="abs" style="left:834.70px;top:0;width:1px;height:500.20000000000005px;background:#e6e6e6"></div>
<div class="t" style="left:7.20px;top:7.53px;font-size:10px;font-weight:normal;color:#4d4d4d;letter-spacing:0px">#</div>
<div class="t" style="left:55.90px;top:7.71px;font-size:9.2px;font-weight:normal;color:#3d84d2;letter-spacing:-0.3px">123</div>
<div class="t" style="left:75.40px;top:7.48px;font-size:10.3px;font-weight:normal;color:#474747;letter-spacing:0px">InvoiceId</div>
<svg style="left:132.40px;top:7.00px" width="12" height="10"><g fill="none" stroke="#ababab" stroke-width="1.4"><path d="M3 0.3 V9.2 M0.6 6.6 L3 9.2 L5.4 6.6"/><path d="M8.6 9.5 V0.6 M6.2 3.2 L8.6 0.6 L11 3.2"/></g></svg>
<div class="t" style="left:158.00px;top:7.71px;font-size:9.2px;font-weight:normal;color:#3d84d2;letter-spacing:-0.3px">123</div>
<div class="t" style="left:177.50px;top:7.48px;font-size:10.3px;font-weight:normal;color:#474747;letter-spacing:0px">CustomerId</div>
<svg style="left:247.60px;top:7.00px" width="12" height="10"><g fill="none" stroke="#ababab" stroke-width="1.4"><path d="M3 0.3 V9.2 M0.6 6.6 L3 9.2 L5.4 6.6"/><path d="M8.6 9.5 V0.6 M6.2 3.2 L8.6 0.6 L11 3.2"/></g></svg>
<div class="t" style="left:273.50px;top:8.89px;font-size:8.4px;font-weight:normal;color:#3d84d2;letter-spacing:-0.6px">A-Z</div>
<div class="t" style="left:292.70px;top:7.48px;font-size:10.3px;font-weight:normal;color:#474747;letter-spacing:0px">InvoiceDate</div>
<svg style="left:362.50px;top:7.00px" width="12" height="10"><g fill="none" stroke="#ababab" stroke-width="1.4"><path d="M3 0.3 V9.2 M0.6 6.6 L3 9.2 L5.4 6.6"/><path d="M8.6 9.5 V0.6 M6.2 3.2 L8.6 0.6 L11 3.2"/></g></svg>
<div class="t" style="left:388.40px;top:8.89px;font-size:8.4px;font-weight:normal;color:#3d84d2;letter-spacing:-0.6px">A-Z</div>
<div class="t" style="left:407.60px;top:7.48px;font-size:10.3px;font-weight:normal;color:#474747;letter-spacing:0px">BillingAddress</div>
<svg style="left:584.00px;top:7.00px" width="12" height="10"><g fill="none" stroke="#ababab" stroke-width="1.4"><path d="M3 0.3 V9.2 M0.6 6.6 L3 9.2 L5.4 6.6"/><path d="M8.6 9.5 V0.6 M6.2 3.2 L8.6 0.6 L11 3.2"/></g></svg>
<div class="t" style="left:609.90px;top:8.89px;font-size:8.4px;font-weight:normal;color:#3d84d2;letter-spacing:-0.6px">A-Z</div>
<div class="t" style="left:629.10px;top:7.48px;font-size:10.3px;font-weight:normal;color:#474747;letter-spacing:0px">BillingCity</div>
<svg style="left:702.70px;top:7.00px" width="12" height="10"><g fill="none" stroke="#ababab" stroke-width="1.4"><path d="M3 0.3 V9.2 M0.6 6.6 L3 9.2 L5.4 6.6"/><path d="M8.6 9.5 V0.6 M6.2 3.2 L8.6 0.6 L11 3.2"/></g></svg>
<div class="t" style="left:728.60px;top:8.89px;font-size:8.4px;font-weight:normal;color:#3d84d2;letter-spacing:-0.6px">A-Z</div>
<div class="t" style="left:747.80px;top:7.48px;font-size:10.3px;font-weight:normal;color:#474747;letter-spacing:0px">BillingState</div>
<svg style="left:816.70px;top:7.00px" width="12" height="10"><g fill="none" stroke="#ababab" stroke-width="1.4"><path d="M3 0.3 V9.2 M0.6 6.6 L3 9.2 L5.4 6.6"/><path d="M8.6 9.5 V0.6 M6.2 3.2 L8.6 0.6 L11 3.2"/></g></svg>
<div class="t" style="left:842.60px;top:8.89px;font-size:8.4px;font-weight:normal;color:#3d84d2;letter-spacing:-0.6px">A-Z</div>
<div class="t" style="left:861.80px;top:7.48px;font-size:10.3px;font-weight:normal;color:#474747;letter-spacing:0px">BillingCountry</div>
<div class="t" style="left:7.20px;top:28.80px;font-size:9.8px;font-weight:normal;color:#4d4d4d;letter-spacing:0.22px">1</div>
<div class="t" style="left:56.10px;top:28.80px;font-size:9.8px;font-weight:normal;color:#4d4d4d;letter-spacing:0.22px">366</div>
<div class="t" style="left:158.20px;top:28.80px;font-size:9.8px;font-weight:normal;color:#4d4d4d;letter-spacing:0.22px">33</div>
<div class="t" style="left:273.40px;top:28.80px;font-size:9.8px;font-weight:normal;color:#4d4d4d;letter-spacing:0.22px">2011-06-02 00:00:00</div>
<div class="t" style="left:388.30px;top:28.80px;font-size:9.8px;font-weight:normal;color:#4d4d4d;letter-spacing:0.22px">5112 48 Street</div>
<div class="t" style="left:609.80px;top:28.80px;font-size:9.8px;font-weight:normal;color:#4d4d4d;letter-spacing:0.22px">Yellowknife</div>
<div class="t" style="left:728.50px;top:28.80px;font-size:9.8px;font-weight:normal;color:#4d4d4d;letter-spacing:0.22px">NT</div>
<div class="t" style="left:842.50px;top:28.80px;font-size:9.8px;font-weight:normal;color:#4d4d4d;letter-spacing:0.22px">Canada</div>
<div class="t" style="left:7.20px;top:49.23px;font-size:9.8px;font-weight:normal;color:#4d4d4d;letter-spacing:0.22px">2</div>
<div class="t" style="left:56.10px;top:49.23px;font-size:9.8px;font-weight:normal;color:#4d4d4d;letter-spacing:0.22px">367</div>
<div class="t" style="left:158.20px;top:49.23px;font-size:9.8px;font-weight:normal;color:#4d4d4d;letter-spacing:0.22px">37</div>
<div class="t" style="left:273.40px;top:49.23px;font-size:9.8px;font-weight:normal;color:#4d4d4d;letter-spacing:0.22px">2011-06-03 00:00:00</div>
<div class="t" style="left:388.30px;top:49.23px;font-size:9.8px;font-weight:normal;color:#4d4d4d;letter-spacing:0.22px">Berger Stra?e 10</div>
<div class="t" style="left:609.80px;top:49.23px;font-size:9.8px;font-weight:normal;color:#4d4d4d;letter-spacing:0.22px">Frankfurt</div>
<div class="t" style="left:728.50px;top:49.23px;font-size:9.8px;font-weight:normal;color:#8e8e8e;letter-spacing:0.22px">[NULL]</div>
<div class="t" style="left:842.50px;top:49.23px;font-size:9.8px;font-weight:normal;color:#4d4d4d;letter-spacing:0.22px">Germany</div>
<div class="t" style="left:7.20px;top:69.66px;font-size:9.8px;font-weight:normal;color:#4d4d4d;letter-spacing:0.22px">3</div>
<div class="t" style="left:56.10px;top:69.66px;font-size:9.8px;font-weight:normal;color:#4d4d4d;letter-spacing:0.22px">368</div>
<div class="t" style="left:158.20px;top:69.66px;font-size:9.8px;font-weight:normal;color:#4d4d4d;letter-spacing:0.22px">43</div>
<div class="t" style="left:273.40px;top:69.66px;font-size:9.8px;font-weight:normal;color:#4d4d4d;letter-spacing:0.22px">2011-06-06 00:00:00</div>
<div class="t" style="left:388.30px;top:69.66px;font-size:9.8px;font-weight:normal;color:#4d4d4d;letter-spacing:0.22px">68, Rue Jouvence</div>
<div class="t" style="left:609.80px;top:69.66px;font-size:9.8px;font-weight:normal;color:#4d4d4d;letter-spacing:0.22px">Dijon</div>
<div class="t" style="left:728.50px;top:69.66px;font-size:9.8px;font-weight:normal;color:#8e8e8e;letter-spacing:0.22px">[NULL]</div>
<div class="t" style="left:842.50px;top:69.66px;font-size:9.8px;font-weight:normal;color:#4d4d4d;letter-spacing:0.22px">France</div>
<div class="t" style="left:7.20px;top:90.09px;font-size:9.8px;font-weight:normal;color:#4d4d4d;letter-spacing:0.22px">4</div>
<div class="t" style="left:56.10px;top:90.09px;font-size:9.8px;font-weight:normal;color:#4d4d4d;letter-spacing:0.22px">369</div>
<div class="t" style="left:158.20px;top:90.09px;font-size:9.8px;font-weight:normal;color:#4d4d4d;letter-spacing:0.22px">52</div>
<div class="t" style="left:273.40px;top:90.09px;font-size:9.8px;font-weight:normal;color:#4d4d4d;letter-spacing:0.22px">2011-06-11 00:00:00</div>
<div class="t" style="left:388.30px;top:90.09px;font-size:9.8px;font-weight:normal;color:#4d4d4d;letter-spacing:0.22px">202 Hoxton Street</div>
<div class="t" style="left:609.80px;top:90.09px;font-size:9.8px;font-weight:normal;color:#4d4d4d;letter-spacing:0.22px">London</div>
<div class="t" style="left:728.50px;top:90.09px;font-size:9.8px;font-weight:normal;color:#8e8e8e;letter-spacing:0.22px">[NULL]</div>
<div class="t" style="left:842.50px;top:90.09px;font-size:9.8px;font-weight:normal;color:#4d4d4d;letter-spacing:0.22px">United Kingdom</div>
<div class="t" style="left:7.20px;top:110.52px;font-size:9.8px;font-weight:normal;color:#4d4d4d;letter-spacing:0.22px">5</div>
<div class="t" style="left:56.10px;top:110.52px;font-size:9.8px;font-weight:normal;color:#4d4d4d;letter-spacing:0.22px">370</div>
<div class="t" style="left:158.20px;top:110.52px;font-size:9.8px;font-weight:normal;color:#4d4d4d;letter-spacing:0.22px">7</div>
<div class="t" style="left:273.40px;top:110.52px;font-size:9.8px;font-weight:normal;color:#4d4d4d;letter-spacing:0.22px">2011-06-19 00:00:00</div>
<div class="t" style="left:388.30px;top:110.52px;font-size:9.8px;font-weight:normal;color:#4d4d4d;letter-spacing:0.22px">Rotenturmstra?e 4, 1010 Innere Stadt</div>
<div class="t" style="left:609.80px;top:110.52px;font-size:9.8px;font-weight:normal;color:#4d4d4d;letter-spacing:0.22px">Vienne</div>
<div class="t" style="left:728.50px;top:110.52px;font-size:9.8px;font-weight:normal;color:#8e8e8e;letter-spacing:0.22px">[NULL]</div>
<div class="t" style="left:842.50px;top:110.52px;font-size:9.8px;font-weight:normal;color:#4d4d4d;letter-spacing:0.22px">Austria</div>
<div class="t" style="left:7.20px;top:130.95px;font-size:9.8px;font-weight:normal;color:#4d4d4d;letter-spacing:0.22px">6</div>
<div class="t" style="left:56.10px;top:130.95px;font-size:9.8px;font-weight:normal;color:#4d4d4d;letter-spacing:0.22px">371</div>
<div class="t" style="left:158.20px;top:130.95px;font-size:9.8px;font-weight:normal;color:#4d4d4d;letter-spacing:0.22px">8</div>
<div class="t" style="left:273.40px;top:130.95px;font-size:9.8px;font-weight:normal;color:#4d4d4d;letter-spacing:0.22px">2011-07-02 00:00:00</div>
<div class="t" style="left:388.30px;top:130.95px;font-size:9.8px;font-weight:normal;color:#4d4d4d;letter-spacing:0.22px">Gretrystraat 63</div>
<div class="t" style="left:609.80px;top:130.95px;font-size:9.8px;font-weight:normal;color:#4d4d4d;letter-spacing:0.22px">Brussels</div>
<div class="t" style="left:728.50px;top:130.95px;font-size:9.8px;font-weight:normal;color:#8e8e8e;letter-spacing:0.22px">[NULL]</div>
<div class="t" style="left:842.50px;top:130.95px;font-size:9.8px;font-weight:normal;color:#4d4d4d;letter-spacing:0.22px">Belgium</div>
<div class="t" style="left:7.20px;top:151.38px;font-size:9.8px;font-weight:normal;color:#4d4d4d;letter-spacing:0.22px">7</div>
<div class="t" style="left:56.10px;top:151.38px;font-size:9.8px;font-weight:normal;color:#4d4d4d;letter-spacing:0.22px">372</div>
<div class="t" style="left:158.20px;top:151.38px;font-size:9.8px;font-weight:normal;color:#4d4d4d;letter-spacing:0.22px">10</div>
<div class="t" style="left:273.40px;top:151.38px;font-size:9.8px;font-weight:normal;color:#4d4d4d;letter-spacing:0.22px">2011-07-02 00:00:00</div>
<div class="t" style="left:388.30px;top:151.38px;font-size:9.8px;font-weight:normal;color:#4d4d4d;letter-spacing:0.22px">Rua Dr. Falcao Filho, 155</div>
<div class="t" style="left:609.80px;top:151.38px;font-size:9.8px;font-weight:normal;color:#4d4d4d;letter-spacing:0.22px">Sao Paulo</div>
<div class="t" style="left:728.50px;top:151.38px;font-size:9.8px;font-weight:normal;color:#4d4d4d;letter-spacing:0.22px">SP</div>
<div class="t" style="left:842.50px;top:151.38px;font-size:9.8px;font-weight:normal;color:#4d4d4d;letter-spacing:0.22px">Brazil</div>
<div class="t" style="left:7.20px;top:171.81px;font-size:9.8px;font-weight:normal;color:#4d4d4d;letter-spacing:0.22px">8</div>
<div class="t" style="left:56.10px;top:171.81px;font-size:9.8px;font-weight:normal;color:#4d4d4d;letter-spacing:0.22px">373</div>
<div class="t" style="left:158.20px;top:171.81px;font-size:9.8px;font-weight:normal;color:#4d4d4d;letter-spacing:0.22px">12</div>
<div class="t" style="left:273.40px;top:171.81px;font-size:9.8px;font-weight:normal;color:#4d4d4d;letter-spacing:0.22px">2011-07-03 00:00:00</div>
<div class="t" style="left:388.30px;top:171.81px;font-size:9.8px;font-weight:normal;color:#4d4d4d;letter-spacing:0.22px">Praca Pio X, 119</div>
<div class="t" style="left:609.80px;top:171.81px;font-size:9.8px;font-weight:normal;color:#4d4d4d;letter-spacing:0.22px">Rio de Janeiro</div>
<div class="t" style="left:728.50px;top:171.81px;font-size:9.8px;font-weight:normal;color:#4d4d4d;letter-spacing:0.22px">RJ</div>
<div class="t" style="left:842.50px;top:171.81px;font-size:9.8px;font-weight:normal;color:#4d4d4d;letter-spacing:0.22px">Brazil</div>
<div class="t" style="left:7.20px;top:192.24px;font-size:9.8px;font-weight:normal;color:#4d4d4d;letter-spacing:0.22px">9</div>
<div class="t" style="left:56.10px;top:192.24px;font-size:9.8px;font-weight:normal;color:#4d4d4d;letter-spacing:0.22px">374</div>
<div class="t" style="left:158.20px;top:192.24px;font-size:9.8px;font-weight:normal;color:#4d4d4d;letter-spacing:0.22px">16</div>
<div class="t" style="left:273.40px;top:192.24px;font-size:9.8px;font-weight:normal;color:#4d4d4d;letter-spacing:0.22px">2011-07-04 00:00:00</div>
<div class="t" style="left:388.30px;top:192.24px;font-size:9.8px;font-weight:normal;color:#4d4d4d;letter-spacing:0.22px">1600 Amphitheatre Parkway</div>
<div class="t" style="left:609.80px;top:192.24px;font-size:9.8px;font-weight:normal;color:#4d4d4d;letter-spacing:0.22px">Mountain View</div>
<div class="t" style="left:728.50px;top:192.24px;font-size:9.8px;font-weight:normal;color:#4d4d4d;letter-spacing:0.22px">CA</div>
<div class="t" style="left:842.50px;top:192.24px;font-size:9.8px;font-weight:normal;color:#4d4d4d;letter-spacing:0.22px">USA</div>
<div class="t" style="left:7.20px;top:212.67px;font-size:9.8px;font-weight:normal;color:#4d4d4d;letter-spacing:0.22px">10</div>
<div class="t" style="left:56.10px;top:212.67px;font-size:9.8px;font-weight:normal;color:#4d4d4d;letter-spacing:0.22px">375</div>
<div class="t" style="left:158.20px;top:212.67px;font-size:9.8px;font-weight:normal;color:#4d4d4d;letter-spacing:0.22px">22</div>
<div class="t" style="left:273.40px;top:212.67px;font-size:9.8px;font-weight:normal;color:#4d4d4d;letter-spacing:0.22px">2011-07-07 00:00:00</div>
<div class="t" style="left:388.30px;top:212.67px;font-size:9.8px;font-weight:normal;color:#4d4d4d;letter-spacing:0.22px">120 S Orange Ave</div>
<div class="t" style="left:609.80px;top:212.67px;font-size:9.8px;font-weight:normal;color:#4d4d4d;letter-spacing:0.22px">Orlando</div>
<div class="t" style="left:728.50px;top:212.67px;font-size:9.8px;font-weight:normal;color:#4d4d4d;letter-spacing:0.22px">FL</div>
<div class="t" style="left:842.50px;top:212.67px;font-size:9.8px;font-weight:normal;color:#4d4d4d;letter-spacing:0.22px">USA</div>
<div class="t" style="left:7.20px;top:233.10px;font-size:9.8px;font-weight:normal;color:#4d4d4d;letter-spacing:0.22px">11</div>
<div class="t" style="left:56.10px;top:233.10px;font-size:9.8px;font-weight:normal;color:#4d4d4d;letter-spacing:0.22px">376</div>
<div class="t" style="left:158.20px;top:233.10px;font-size:9.8px;font-weight:normal;color:#4d4d4d;letter-spacing:0.22px">31</div>
<div class="t" style="left:273.40px;top:233.10px;font-size:9.8px;font-weight:normal;color:#4d4d4d;letter-spacing:0.22px">2011-07-12 00:00:00</div>
<div class="t" style="left:388.30px;top:233.10px;font-size:9.8px;font-weight:normal;color:#4d4d4d;letter-spacing:0.22px">194A Chain Lake Drive</div>
<div class="t" style="left:609.80px;top:233.10px;font-size:9.8px;font-weight:normal;color:#4d4d4d;letter-spacing:0.22px">Halifax</div>
<div class="t" style="left:728.50px;top:233.10px;font-size:9.8px;font-weight:normal;color:#4d4d4d;letter-spacing:0.22px">NS</div>
<div class="t" style="left:842.50px;top:233.10px;font-size:9.8px;font-weight:normal;color:#4d4d4d;letter-spacing:0.22px">Canada</div>
<div class="t" style="left:7.20px;top:253.53px;font-size:9.8px;font-weight:normal;color:#4d4d4d;letter-spacing:0.22px">12</div>
<div class="t" style="left:56.10px;top:253.53px;font-size:9.8px;font-weight:normal;color:#4d4d4d;letter-spacing:0.22px">377</div>
<div class="t" style="left:158.20px;top:253.53px;font-size:9.8px;font-weight:normal;color:#4d4d4d;letter-spacing:0.22px">45</div>
<div class="t" style="left:273.40px;top:253.53px;font-size:9.8px;font-weight:normal;color:#4d4d4d;letter-spacing:0.22px">2011-07-20 00:00:00</div>
<div class="t" style="left:388.30px;top:253.53px;font-size:9.8px;font-weight:normal;color:#4d4d4d;letter-spacing:0.22px">Erzsebet krt. 58.</div>
<div class="t" style="left:609.80px;top:253.53px;font-size:9.8px;font-weight:normal;color:#4d4d4d;letter-spacing:0.22px">Budapest</div>
<div class="t" style="left:728.50px;top:253.53px;font-size:9.8px;font-weight:normal;color:#8e8e8e;letter-spacing:0.22px">[NULL]</div>
<div class="t" style="left:842.50px;top:253.53px;font-size:9.8px;font-weight:normal;color:#4d4d4d;letter-spacing:0.22px">Hungary</div>
<div class="t" style="left:7.20px;top:273.96px;font-size:9.8px;font-weight:normal;color:#4d4d4d;letter-spacing:0.22px">13</div>
<div class="t" style="left:56.10px;top:273.96px;font-size:9.8px;font-weight:normal;color:#4d4d4d;letter-spacing:0.22px">378</div>
<div class="t" style="left:158.20px;top:273.96px;font-size:9.8px;font-weight:normal;color:#4d4d4d;letter-spacing:0.22px">46</div>
<div class="t" style="left:273.40px;top:273.96px;font-size:9.8px;font-weight:normal;color:#4d4d4d;letter-spacing:0.22px">2011-08-02 00:00:00</div>
<div class="t" style="left:388.30px;top:273.96px;font-size:9.8px;font-weight:normal;color:#4d4d4d;letter-spacing:0.22px">3 Chatham Street</div>
<div class="t" style="left:609.80px;top:273.96px;font-size:9.8px;font-weight:normal;color:#4d4d4d;letter-spacing:0.22px">Dublin</div>
<div class="t" style="left:728.50px;top:273.96px;font-size:9.8px;font-weight:normal;color:#4d4d4d;letter-spacing:0.22px">Dublin</div>
<div class="t" style="left:842.50px;top:273.96px;font-size:9.8px;font-weight:normal;color:#4d4d4d;letter-spacing:0.22px">Ireland</div>
<div class="t" style="left:7.20px;top:294.39px;font-size:9.8px;font-weight:normal;color:#4d4d4d;letter-spacing:0.22px">14</div>
<div class="t" style="left:56.10px;top:294.39px;font-size:9.8px;font-weight:normal;color:#4d4d4d;letter-spacing:0.22px">379</div>
<div class="t" style="left:158.20px;top:294.39px;font-size:9.8px;font-weight:normal;color:#4d4d4d;letter-spacing:0.22px">48</div>
<div class="t" style="left:273.40px;top:294.39px;font-size:9.8px;font-weight:normal;color:#4d4d4d;letter-spacing:0.22px">2011-08-02 00:00:00</div>
<div class="t" style="left:388.30px;top:294.39px;font-size:9.8px;font-weight:normal;color:#4d4d4d;letter-spacing:0.22px">Lijnbaansgracht 120bg</div>
<div class="t" style="left:609.80px;top:294.39px;font-size:9.8px;font-weight:normal;color:#4d4d4d;letter-spacing:0.22px">Amsterdam</div>
<div class="t" style="left:728.50px;top:294.39px;font-size:9.8px;font-weight:normal;color:#4d4d4d;letter-spacing:0.22px">VV</div>
<div class="t" style="left:842.50px;top:294.39px;font-size:9.8px;font-weight:normal;color:#4d4d4d;letter-spacing:0.22px">Netherlands</div>
<div class="t" style="left:7.20px;top:314.82px;font-size:9.8px;font-weight:normal;color:#4d4d4d;letter-spacing:0.22px">15</div>
<div class="t" style="left:56.10px;top:314.82px;font-size:9.8px;font-weight:normal;color:#4d4d4d;letter-spacing:0.22px">380</div>
<div class="t" style="left:158.20px;top:314.82px;font-size:9.8px;font-weight:normal;color:#4d4d4d;letter-spacing:0.22px">50</div>
<div class="t" style="left:273.40px;top:314.82px;font-size:9.8px;font-weight:normal;color:#4d4d4d;letter-spacing:0.22px">2011-08-03 00:00:00</div>
<div class="t" style="left:388.30px;top:314.82px;font-size:9.8px;font-weight:normal;color:#4d4d4d;letter-spacing:0.22px">C/ San Bernardo 85</div>
<div class="t" style="left:609.80px;top:314.82px;font-size:9.8px;font-weight:normal;color:#4d4d4d;letter-spacing:0.22px">Madrid</div>
<div class="t" style="left:728.50px;top:314.82px;font-size:9.8px;font-weight:normal;color:#8e8e8e;letter-spacing:0.22px">[NULL]</div>
<div class="t" style="left:842.50px;top:314.82px;font-size:9.8px;font-weight:normal;color:#4d4d4d;letter-spacing:0.22px">Spain</div>
<div class="t" style="left:7.20px;top:335.25px;font-size:9.8px;font-weight:normal;color:#4d4d4d;letter-spacing:0.22px">16</div>
<div class="t" style="left:56.10px;top:335.25px;font-size:9.8px;font-weight:normal;color:#4d4d4d;letter-spacing:0.22px">381</div>
<div class="t" style="left:158.20px;top:335.25px;font-size:9.8px;font-weight:normal;color:#4d4d4d;letter-spacing:0.22px">54</div>
<div class="t" style="left:273.40px;top:335.25px;font-size:9.8px;font-weight:normal;color:#4d4d4d;letter-spacing:0.22px">2011-08-04 00:00:00</div>
<div class="t" style="left:388.30px;top:335.25px;font-size:9.8px;font-weight:normal;color:#4d4d4d;letter-spacing:0.22px">110 Raeburn Pl</div>
<div class="t" style="left:609.80px;top:335.25px;font-size:9.8px;font-weight:normal;color:#4d4d4d;letter-spacing:0.22px">Edinburgh</div>
<div class="t" style="left:728.50px;top:335.25px;font-size:9.8px;font-weight:normal;color:#8e8e8e;letter-spacing:0.22px">[NULL]</div>
<div class="t" style="left:842.50px;top:335.25px;font-size:9.8px;font-weight:normal;color:#4d4d4d;letter-spacing:0.22px">United Kingdom</div>
<div class="t" style="left:7.20px;top:355.68px;font-size:9.8px;font-weight:normal;color:#4d4d4d;letter-spacing:0.22px">17</div>
<div class="t" style="left:56.10px;top:355.68px;font-size:9.8px;font-weight:normal;color:#4d4d4d;letter-spacing:0.22px">382</div>
<div class="t" style="left:158.20px;top:355.68px;font-size:9.8px;font-weight:normal;color:#4d4d4d;letter-spacing:0.22px">1</div>
<div class="t" style="left:273.40px;top:355.68px;font-size:9.8px;font-weight:normal;color:#4d4d4d;letter-spacing:0.22px">2011-08-07 00:00:00</div>
<div class="t" style="left:388.30px;top:355.68px;font-size:9.8px;font-weight:normal;color:#4d4d4d;letter-spacing:0.22px">Av. Brigadeiro Faria Lima, 2170</div>
<div class="t" style="left:609.80px;top:355.68px;font-size:9.8px;font-weight:normal;color:#4d4d4d;letter-spacing:0.22px">Sao Jose dos Campos</div>
<div class="t" style="left:728.50px;top:355.68px;font-size:9.8px;font-weight:normal;color:#4d4d4d;letter-spacing:0.22px">SP</div>
<div class="t" style="left:842.50px;top:355.68px;font-size:9.8px;font-weight:normal;color:#4d4d4d;letter-spacing:0.22px">Brazil</div>
<div class="t" style="left:7.20px;top:376.11px;font-size:9.8px;font-weight:normal;color:#4d4d4d;letter-spacing:0.22px">18</div>
<div class="t" style="left:56.10px;top:376.11px;font-size:9.8px;font-weight:normal;color:#4d4d4d;letter-spacing:0.22px">383</div>
<div class="t" style="left:158.20px;top:376.11px;font-size:9.8px;font-weight:normal;color:#4d4d4d;letter-spacing:0.22px">10</div>
<div class="t" style="left:273.40px;top:376.11px;font-size:9.8px;font-weight:normal;color:#4d4d4d;letter-spacing:0.22px">2011-08-12 00:00:00</div>
<div class="t" style="left:388.30px;top:376.11px;font-size:9.8px;font-weight:normal;color:#4d4d4d;letter-spacing:0.22px">Rua Dr. Falcao Filho, 155</div>
<div class="t" style="left:609.80px;top:376.11px;font-size:9.8px;font-weight:normal;color:#4d4d4d;letter-spacing:0.22px">Sao Paulo</div>
<div class="t" style="left:728.50px;top:376.11px;font-size:9.8px;font-weight:normal;color:#4d4d4d;letter-spacing:0.22px">SP</div>
<div class="t" style="left:842.50px;top:376.11px;font-size:9.8px;font-weight:normal;color:#4d4d4d;letter-spacing:0.22px">Brazil</div>
<div class="t" style="left:7.20px;top:396.54px;font-size:9.8px;font-weight:normal;color:#4d4d4d;letter-spacing:0.22px">19</div>
<div class="t" style="left:56.10px;top:396.54px;font-size:9.8px;font-weight:normal;color:#4d4d4d;letter-spacing:0.22px">384</div>
<div class="t" style="left:158.20px;top:396.54px;font-size:9.8px;font-weight:normal;color:#4d4d4d;letter-spacing:0.22px">24</div>
<div class="t" style="left:273.40px;top:396.54px;font-size:9.8px;font-weight:normal;color:#4d4d4d;letter-spacing:0.22px">2011-08-20 00:00:00</div>
<div class="t" style="left:388.30px;top:396.54px;font-size:9.8px;font-weight:normal;color:#4d4d4d;letter-spacing:0.22px">162 E Superior Street</div>
<div class="t" style="left:609.80px;top:396.54px;font-size:9.8px;font-weight:normal;color:#4d4d4d;letter-spacing:0.22px">Chicago</div>
<div class="t" style="left:728.50px;top:396.54px;font-size:9.8px;font-weight:normal;color:#4d4d4d;letter-spacing:0.22px">IL</div>
<div class="t" style="left:842.50px;top:396.54px;font-size:9.8px;font-weight:normal;color:#4d4d4d;letter-spacing:0.22px">USA</div>
<div class="t" style="left:7.20px;top:416.97px;font-size:9.8px;font-weight:normal;color:#4d4d4d;letter-spacing:0.22px">20</div>
<div class="t" style="left:56.10px;top:416.97px;font-size:9.8px;font-weight:normal;color:#4d4d4d;letter-spacing:0.22px">385</div>
<div class="t" style="left:158.20px;top:416.97px;font-size:9.8px;font-weight:normal;color:#4d4d4d;letter-spacing:0.22px">25</div>
<div class="t" style="left:273.40px;top:416.97px;font-size:9.8px;font-weight:normal;color:#4d4d4d;letter-spacing:0.22px">2011-09-02 00:00:00</div>
<div class="t" style="left:388.30px;top:416.97px;font-size:9.8px;font-weight:normal;color:#4d4d4d;letter-spacing:0.22px">319 N. Frances Street</div>
<div class="t" style="left:609.80px;top:416.97px;font-size:9.8px;font-weight:normal;color:#4d4d4d;letter-spacing:0.22px">Madison</div>
<div class="t" style="left:728.50px;top:416.97px;font-size:9.8px;font-weight:normal;color:#4d4d4d;letter-spacing:0.22px">WI</div>
<div class="t" style="left:842.50px;top:416.97px;font-size:9.8px;font-weight:normal;color:#4d4d4d;letter-spacing:0.22px">USA</div>
<div class="t" style="left:7.20px;top:437.40px;font-size:9.8px;font-weight:normal;color:#4d4d4d;letter-spacing:0.22px">21</div>
<div class="t" style="left:56.10px;top:437.40px;font-size:9.8px;font-weight:normal;color:#4d4d4d;letter-spacing:0.22px">386</div>
<div class="t" style="left:158.20px;top:437.40px;font-size:9.8px;font-weight:normal;color:#4d4d4d;letter-spacing:0.22px">27</div>
<div class="t" style="left:273.40px;top:437.40px;font-size:9.8px;font-weight:normal;color:#4d4d4d;letter-spacing:0.22px">2011-09-02 00:00:00</div>
<div class="t" style="left:388.30px;top:437.40px;font-size:9.8px;font-weight:normal;color:#4d4d4d;letter-spacing:0.22px">1033 N Park Ave</div>
<div class="t" style="left:609.80px;top:437.40px;font-size:9.8px;font-weight:normal;color:#4d4d4d;letter-spacing:0.22px">Tucson</div>
<div class="t" style="left:728.50px;top:437.40px;font-size:9.8px;font-weight:normal;color:#4d4d4d;letter-spacing:0.22px">AZ</div>
<div class="t" style="left:842.50px;top:437.40px;font-size:9.8px;font-weight:normal;color:#4d4d4d;letter-spacing:0.22px">USA</div>
<div class="t" style="left:7.20px;top:457.83px;font-size:9.8px;font-weight:normal;color:#4d4d4d;letter-spacing:0.22px">22</div>
<div class="t" style="left:56.10px;top:457.83px;font-size:9.8px;font-weight:normal;color:#4d4d4d;letter-spacing:0.22px">387</div>
<div class="t" style="left:158.20px;top:457.83px;font-size:9.8px;font-weight:normal;color:#4d4d4d;letter-spacing:0.22px">29</div>
<div class="t" style="left:273.40px;top:457.83px;font-size:9.8px;font-weight:normal;color:#4d4d4d;letter-spacing:0.22px">2011-09-03 00:00:00</div>
<div class="t" style="left:388.30px;top:457.83px;font-size:9.8px;font-weight:normal;color:#4d4d4d;letter-spacing:0.22px">796 Dundas Street West</div>
<div class="t" style="left:609.80px;top:457.83px;font-size:9.8px;font-weight:normal;color:#4d4d4d;letter-spacing:0.22px">Toronto</div>
<div class="t" style="left:728.50px;top:457.83px;font-size:9.8px;font-weight:normal;color:#4d4d4d;letter-spacing:0.22px">ON</div>
<div class="t" style="left:842.50px;top:457.83px;font-size:9.8px;font-weight:normal;color:#4d4d4d;letter-spacing:0.22px">Canada</div>
<div class="t" style="left:7.20px;top:478.26px;font-size:9.8px;font-weight:normal;color:#4d4d4d;letter-spacing:0.22px">23</div>
<div class="t" style="left:56.10px;top:478.26px;font-size:9.8px;font-weight:normal;color:#4d4d4d;letter-spacing:0.22px">388</div>
<div class="t" style="left:158.20px;top:478.26px;font-size:9.8px;font-weight:normal;color:#4d4d4d;letter-spacing:0.22px">33</div>
<div class="t" style="left:273.40px;top:478.26px;font-size:9.8px;font-weight:normal;color:#4d4d4d;letter-spacing:0.22px">2011-09-04 00:00:00</div>
<div class="t" style="left:388.30px;top:478.26px;font-size:9.8px;font-weight:normal;color:#4d4d4d;letter-spacing:0.22px">5112 48 Street</div>
<div class="t" style="left:609.80px;top:478.26px;font-size:9.8px;font-weight:normal;color:#4d4d4d;letter-spacing:0.22px">Yellowknife</div>
<div class="t" style="left:728.50px;top:478.26px;font-size:9.8px;font-weight:normal;color:#4d4d4d;letter-spacing:0.22px">NT</div>
<div class="t" style="left:842.50px;top:478.26px;font-size:9.8px;font-weight:normal;color:#4d4d4d;letter-spacing:0.22px">Canada</div>
<div class="t" style="left:7.20px;top:497.59px;font-size:9.8px;font-weight:normal;color:#4d4d4d;letter-spacing:0.22px">24</div>
<div class="t" style="left:56.10px;top:497.59px;font-size:9.8px;font-weight:normal;color:#4d4d4d;letter-spacing:0.22px">389</div>
<div class="t" style="left:158.20px;top:497.59px;font-size:9.8px;font-weight:normal;color:#4d4d4d;letter-spacing:0.22px">39</div>
<div class="t" style="left:273.40px;top:497.59px;font-size:9.8px;font-weight:normal;color:#4d4d4d;letter-spacing:0.22px">2011-09-07 00:00:00</div>
<div class="t" style="left:388.30px;top:497.59px;font-size:9.8px;font-weight:normal;color:#4d4d4d;letter-spacing:0.22px">4, Rue Milton</div>
<div class="t" style="left:609.80px;top:497.59px;font-size:9.8px;font-weight:normal;color:#4d4d4d;letter-spacing:0.22px">Paris</div>
<div class="t" style="left:728.50px;top:497.59px;font-size:9.8px;font-weight:normal;color:#8e8e8e;letter-spacing:0.22px">[NULL]</div>
<div class="t" style="left:842.50px;top:497.59px;font-size:9.8px;font-weight:normal;color:#4d4d4d;letter-spacing:0.22px">France</div>
<div class="abs" style="left:49.10px;top:23.00px;width:101.90px;height:19.6px;border:1px solid #6a9ae0;border-radius:2px"></div>
<svg style="left:133.10px;top:28.60px" width="14" height="10"><path d="M0 1.2 H12.8 M0 4.9 H12.8 M0 8.5 H12.8" stroke="#9a9a9a" stroke-width="1.1"/></svg>
</div>
<svg style="left:0;top:0" width="1" height="1">
<path d="M227.9 651.3 A5.5 5.5 0 1 1 231.3 647.6" fill="none" stroke="#3d84d2" stroke-width="1.2"/><path d="M229 648.2 L232.6 651.6 L232.9 647 Z" fill="#3d84d2"/>
<path d="M239.3 644.3 L241.8 647 L244.3 644.3" fill="none" stroke="#444" stroke-width="1.3"/>
</svg>
<div class="abs" style="left:250.8px;top:636.2px;width:64px;height:19.6px;background:#fff;border:1px solid #d0d0d0;border-radius:3px"></div>
<div class="abs" style="left:294px;top:638.8px;width:13.8px;height:14.4px;background:#e4e4e4;border-radius:2px"></div>
<svg style="left:0;top:0" width="1" height="1"><path d="M298.5 643.5 L300.9 641 L303.3 643.5 M298.5 648.5 L300.9 651 L303.3 648.5" fill="none" stroke="#777" stroke-width="1"/></svg>
<div class="t" style="left:257.5px;top:640.62px;font-size:11.2px;font-weight:normal;color:#555;letter-spacing:0px">100</div>
<svg style="left:0;top:0" width="1" height="1"><g fill="none" stroke="#3d84d2" stroke-width="1.3"><path d="M322.3 641 H324.5 Q328.5 641 328.5 645 Q328.5 641 332.5 641 H334.7"/><path d="M328.5 644 V648.5 M326.5 646.8 L328.5 648.8 L330.5 646.8"/><path d="M322.5 647.5 V651 H334.5 V647.5"/></g></svg>
<div class="t" style="left:339px;top:642.02px;font-size:9.9px;font-weight:normal;color:#3a3a3a;letter-spacing:0px;-webkit-text-stroke:0.35px #3a3a3a">100+</div>
<svg style="left:0;top:0" width="1" height="1"><g stroke="#2f73c4" stroke-width="1.3"><path d="M371.2 642.6 H382.3 M371.2 645.8 H379.5 M371.2 649 H375.5"/></g><path d="M377 649.2 H383.3 M380.15 646 V652.4" stroke="#5cb848" stroke-width="1.6"/></svg>
<svg style="left:0;top:0" width="1" height="1"><g stroke="#9ab8de" stroke-width="1.2" fill="none"><path d="M393.8 642.6 H404.5 M393.8 645.8 H398.5 M393.8 649 H398"/><path d="M400.3 646.3 Q399.3 649.3 400.3 652.3 M406 646.3 Q407 649.3 406 652.3"/></g><path d="M401.6 649.3 H404.8 M403.2 647.7 V650.9" stroke="#8fcd89" stroke-width="1"/></svg>
<svg style="left:0;top:0" width="1" height="1"><g stroke="#9ab8de" stroke-width="1.3"><path d="M416.4 642.6 H428.3 M416.4 645.8 H423.5 M416.4 649.2 H419.8"/></g><path d="M421.8 649.2 H428.6" stroke="#e99" stroke-width="1.3"/></svg>
<svg style="left:0;top:0" width="1" height="1"><g fill="none" stroke="#9ab8de" stroke-width="1.2"><rect x="439.8" y="644.6" width="7.2" height="7.6"/><path d="M443 644.6 V640.8 H450.5 V648.5"/><path d="M442.5 648.5 H447.5 M446 646.8 L447.8 648.5 L446 650.2"/><path d="M450.5 648.5 Q452 650 450 651.2"/></g></svg>
<svg style="left:0;top:0" width="1" height="1"><path d="M465 649 A3 3 0 0 1 465.5 643.5 A4 4 0 0 1 473 643.5 A2.8 2.8 0 0 1 473.5 649" fill="none" stroke="#9dd39a" stroke-width="1.2"/><path d="M469 651.5 V645 M466.8 647 L469 644.8 L471.2 647" fill="none" stroke="#9dd39a" stroke-width="1.2"/></svg>
<div class="t" style="left:478.4px;top:642.70px;font-size:9.1px;font-weight:bold;color:#ababab;letter-spacing:0px">SAVE</div>
<svg style="left:0;top:0" width="1" height="1"><g fill="none" stroke="#9ab8de" stroke-width="1.1"><path d="M515 641.5 H519 M513 641.5 V652 H517"/><path d="M519 640.5 H522.5 V645"/></g><path d="M518.5 647 L523.5 652 M523.5 647 L518.5 652" stroke="#e06060" stroke-width="1.2"/></svg>
<div class="t" style="left:528.4px;top:642.70px;font-size:9.1px;font-weight:bold;color:#ababab;letter-spacing:0px">CANCEL</div>
<svg style="left:0;top:0" width="1" height="1"><g fill="none" stroke="#9ab8de" stroke-width="1.1"><path d="M577 641 V652 H582 M577 641 H586"/><circle cx="584" cy="647.5" r="2.8"/><path d="M586 649.5 L588.3 651.8"/></g></svg>
<div class="t" style="left:592.1px;top:642.78px;font-size:9.0px;font-weight:bold;color:#ababab;letter-spacing:0px">SCRIPT</div>
<svg style="left:0;top:0" width="1" height="1"><g fill="none" stroke="#3d84d2" stroke-width="1.1"><rect x="635.7" y="641" width="11" height="10"/><path d="M635.7 643.3 H646.7"/></g><g fill="#3d84d2"><rect x="637.5" y="645" width="1.6" height="1.4"/><rect x="640.3" y="645" width="1.6" height="1.4"/><rect x="637.5" y="647.8" width="1.6" height="1.4"/><rect x="640.3" y="647.8" width="1.6" height="1.4"/></g><path d="M643.5 649.5 H648.5 M646 647 V652" stroke="#3d84d2" stroke-width="1.2"/></svg>
<div class="t" style="left:651.9px;top:642.78px;font-size:9.0px;font-weight:bold;color:#444;letter-spacing:0px">ADD DATASET</div>
<svg style="left:0;top:0" width="1" height="1"><g fill="none" stroke="#3d84d2" stroke-width="1.3"><path d="M727.5 641.2 H736"/><path d="M731.8 652 V644 M729.3 646.5 L731.8 644 L734.3 646.5"/></g></svg>
<div class="t" style="left:741.6px;top:642.70px;font-size:9.1px;font-weight:bold;color:#444;letter-spacing:0px">EXPORT</div>
<svg style="left:0;top:0" width="1" height="1"><g fill="none" stroke="#3d84d2" stroke-width="1.1"><rect x="789" y="641.3" width="11.3" height="9.8"/><path d="M789 643.5 H800.3 M794.7 643.5 V651.1"/><path d="M790.5 647.3 H793.5 M792.3 646 L793.5 647.3 L792.3 648.6 M796 647.3 H799"/></g></svg>
<div class="t" style="left:805px;top:642.61px;font-size:9.2px;font-weight:bold;color:#444;letter-spacing:0px">IMPORT</div>
<div class="t" style="left:1070px;top:642.08px;font-size:10.3px;font-weight:normal;color:#777;letter-spacing:0px">100 row(s) fetched - 13ms</div>
</div>
<div class="abs" style="left:0;top:0;width:1204px;height:661px;border:2px solid #86695a;pointer-events:none"></div>
</body></html>
